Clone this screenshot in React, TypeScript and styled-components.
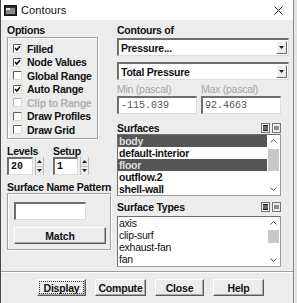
import styled, { createGlobalStyle } from 'styled-components';

const GlobalStyle = createGlobalStyle`
  html, body {
    margin: 0;
    padding: 0;
    background: #e4e4e4;
  }
  body {
    font-family: "Liberation Sans", Arial, sans-serif;
  }
`;

const Window = styled.div`
  width: 294px;
  height: 303px;
  box-sizing: border-box;
  background: #ececec;
  border-left: 1px solid #4a4a4a;
  border-right: 1px solid #8a8a8a;
  display: flex;
  flex-direction: column;
  overflow: hidden;
`;

const TitleBar = styled.div`
  height: 20px;
  background: #ffffff;
  display: flex;
  align-items: center;
  padding: 0 10px 0 3px;
  gap: 4px;
  font-size: 11px;
  color: #111;
`;

const TitleText = styled.span`
  flex: 1;
  letter-spacing: 0.1px;
`;

const Body = styled.div`
  flex: 1;
  display: flex;
  gap: 6px;
  padding: 4px 0 0 6px;
`;

const Column = styled.div<{ $width: number }>`
  width: ${(p) => p.$width}px;
  display: flex;
  flex-direction: column;
`;

const Label = styled.div<{ $muted?: boolean; $top?: number; $height?: number }>`
  height: ${(p) => p.$height ?? 13}px;
  line-height: ${(p) => p.$height ?? 13}px;
  margin-top: ${(p) => p.$top ?? 0}px;
  font-size: ${(p) => (p.$muted ? 10.5 : 10.5)}px;
  font-weight: ${(p) => (p.$muted ? 400 : 700)};
  letter-spacing: -0.25px;
  color: ${(p) => (p.$muted ? '#a4a4a4' : '#111')};
  white-space: nowrap;
`;

const GroupBox = styled.div<{ $width: number }>`
  width: ${(p) => p.$width}px;
  box-sizing: border-box;
  border: 1px solid #a0a0a0;
  box-shadow: inset 1px 1px 0 #fff, 1px 1px 0 #fff;
  display: flex;
  flex-direction: column;
`;

const OptionsBox = styled(GroupBox)`
  height: 102px;
  padding: 4px 0 0 5px;
`;

const CheckRow = styled.div<{ $disabled?: boolean }>`
  height: 13.5px;
  display: flex;
  align-items: center;
  gap: 5px;
  font-size: 10.5px;
  font-weight: 700;
  letter-spacing: -0.25px;
  color: ${(p) => (p.$disabled ? '#b0b0b0' : '#111')};
  white-space: nowrap;
`;

const Fields = styled.div`
  display: flex;
  gap: 9px;
`;

const Field = styled.div`
  display: flex;
  flex-direction: column;
`;

const SpinRow = styled.div`
  display: flex;
  gap: 2px;
`;

const TextBox = styled.div<{ $width: number; $bold?: boolean }>`
  width: ${(p) => p.$width}px;
  height: 18px;
  box-sizing: border-box;
  background: #fff;
  border-top: 2px solid #6e6e6e;
  border-left: 2px solid #6e6e6e;
  border-right: 1px solid #dcdcdc;
  border-bottom: 1px solid #dcdcdc;
  padding-left: 2px;
  font-family: "Liberation Mono", "Courier New", monospace;
  font-size: 10px;
  font-weight: ${(p) => (p.$bold ? 700 : 400)};
  line-height: 15px;
  color: ${(p) => (p.$bold ? '#111' : '#555')};
`;

const Spinner = styled.div`
  width: 9px;
  height: 18px;
  display: flex;
  flex-direction: column;
  border-left: 1px solid #bdbdbd;
  border-right: 1px solid #bdbdbd;
  box-sizing: border-box;
`;

const SpinHalf = styled.div`
  flex: 1;
  display: flex;
  align-items: center;
  justify-content: center;
  border-bottom: 1px solid #c4c4c4;
  &:last-child {
    border-bottom: none;
  }
`;

const PatternBox = styled(GroupBox)`
  padding: 8px 0 5px 6px;
  gap: 7px;
`;

const Button = styled.div<{ $width: number; $focused?: boolean }>`
  width: ${(p) => p.$width}px;
  height: 17px;
  box-sizing: border-box;
  background: #ececec;
  border-top: 1px solid #fff;
  border-left: 1px solid #fff;
  border-right: 1px solid #5a5a5a;
  border-bottom: 1px solid #5a5a5a;
  box-shadow: inset -1px -1px 0 #a8a8a8;
  display: flex;
  align-items: center;
  justify-content: center;
  font-size: 10.5px;
  font-weight: 700;
  letter-spacing: -0.2px;
  color: #111;
  outline: ${(p) => (p.$focused ? '1px dotted #333' : 'none')};
  outline-offset: -3px;
`;

const Dropdown = styled.div<{ $top: number }>`
  width: 172px;
  height: 18px;
  margin-top: ${(p) => p.$top}px;
  box-sizing: border-box;
  background: #fff;
  border-top: 2px solid #6e6e6e;
  border-left: 2px solid #6e6e6e;
  border-right: 1px solid #dcdcdc;
  border-bottom: 1px solid #dcdcdc;
  display: flex;
  align-items: center;
  padding: 0 1px 0 2px;
  font-size: 10.5px;
  font-weight: 700;
  letter-spacing: -0.25px;
  color: #111;
`;

const DropText = styled.span`
  flex: 1;
`;

const DropArrow = styled.div`
  width: 11px;
  height: 13px;
  box-sizing: border-box;
  background: #ececec;
  border-top: 1px solid #fff;
  border-left: 1px solid #fff;
  border-right: 1px solid #6a6a6a;
  border-bottom: 1px solid #6a6a6a;
  display: flex;
  align-items: center;
  justify-content: center;
`;

const RangeRow = styled.div`
  width: 164px;
  display: flex;
  gap: 4px;
  margin-top: 3px;
`;

const ListHeader = styled.div<{ $top: number }>`
  width: 164px;
  height: 13px;
  margin-top: ${(p) => p.$top}px;
  display: flex;
  align-items: center;
  gap: 2px;
`;

const HeaderLabel = styled.span`
  flex: 1;
  font-size: 10.5px;
  font-weight: 700;
  letter-spacing: -0.25px;
  color: #111;
`;

const ListBox = styled.div<{ $top: number; $height: number }>`
  width: 164px;
  height: ${(p) => p.$height}px;
  margin-top: ${(p) => p.$top}px;
  box-sizing: border-box;
  background: #fff;
  border-top: 1px solid #6e6e6e;
  border-left: 1px solid #6e6e6e;
  border-right: 1px solid #9a9a9a;
  border-bottom: 1px solid #9a9a9a;
  display: flex;
`;

const ListItems = styled.div`
  flex: 1;
  display: flex;
  flex-direction: column;
`;

const ListItem = styled.div<{ $selected?: boolean; $bold?: boolean }>`
  height: 12px;
  line-height: 12px;
  padding-left: 1px;
  font-size: 10.5px;
  font-weight: ${(p) => (p.$bold ? 700 : 400)};
  letter-spacing: -0.25px;
  background: ${(p) => (p.$selected ? '#555555' : 'transparent')};
  color: ${(p) => (p.$selected ? '#dedede' : '#111')};
  white-space: nowrap;
`;

const ScrollBar = styled.div`
  width: 13px;
  display: flex;
  flex-direction: column;
  align-items: center;
  background: #fff;
`;

const ScrollArrow = styled.div`
  height: 12px;
  display: flex;
  align-items: center;
  justify-content: center;
`;

const ScrollTrack = styled.div<{ $thumbTop: number; $thumbHeight: number }>`
  flex: 1;
  width: 11px;
  position: relative;
  &::after {
    content: '';
    position: absolute;
    left: 0;
    right: 0;
    top: ${(p) => p.$thumbTop}px;
    height: ${(p) => p.$thumbHeight}px;
    background: #c8c8c8;
  }
`;

const Separator = styled.div`
  height: 1px;
  background: #a0a0a0;
  border-bottom: 1px solid #fff;
`;

const ButtonRow = styled.div`
  height: 30px;
  display: flex;
  gap: 9px;
  padding: 6px 0 0 36px;
  box-sizing: border-box;
`;

function AppIcon() {
  return (
    <svg width="13" height="11" viewBox="0 0 13 11">
      <rect x="0.5" y="0.5" width="12" height="10" fill="#2a2a2a" stroke="#111" />
      <rect x="2" y="3" width="9" height="6" fill="#8a8a8a" />
      <rect x="2" y="3" width="4" height="2" fill="#e8e8e8" />
    </svg>
  );
}

function CloseIcon() {
  return (
    <svg width="9" height="9" viewBox="0 0 9 9">
      <path d="M0.5 0.5 L8.5 8.5 M8.5 0.5 L0.5 8.5" stroke="#222" strokeWidth="1" />
    </svg>
  );
}

function CheckBox({ checked, disabled }: { checked?: boolean; disabled?: boolean }) {
  const line = disabled ? '#b8b8b8' : '#111';
  return (
    <svg width="9" height="9" viewBox="0 0 9 9">
      <rect x="0" y="0" width="9" height="9" fill="#fff" />
      <path d="M0.5 8.5 V0.5 H8.5" stroke={disabled ? '#b8b8b8' : '#5a5a5a'} fill="none" />
      <path d="M8.5 0.5 V8.5 H0.5" stroke="#d8d8d8" fill="none" />
      {checked && (
        <path d="M2 4 L3.8 6 L7 2.2" stroke={line} strokeWidth="1.6" fill="none" />
      )}
    </svg>
  );
}

function Triangle({ up, size = 5 }: { up?: boolean; size?: number }) {
  const h = Math.ceil(size / 2);
  return (
    <svg width={size} height={h} viewBox={`0 0 ${size} ${h}`}>
      <path
        d={up ? `M0 ${h} L${size / 2} 0 L${size} ${h} Z` : `M0 0 L${size} 0 L${size / 2} ${h} Z`}
        fill="#222"
      />
    </svg>
  );
}

function Chevron({ up }: { up?: boolean }) {
  return (
    <svg width="7" height="4" viewBox="0 0 7 4">
      <path d={up ? 'M0.5 3.5 L3.5 0.5 L6.5 3.5' : 'M0.5 0.5 L3.5 3.5 L6.5 0.5'} stroke="#555" fill="none" />
    </svg>
  );
}

function ListTools() {
  return (
    <>
      <svg width="9" height="10" viewBox="0 0 9 10">
        <rect x="0.5" y="0.5" width="8" height="9" fill="#ececec" stroke="#777" />
        <rect x="2" y="2" width="5" height="6" fill="#222" />
        <path d="M2 4 H7 M2 6 H7" stroke="#aaa" />
      </svg>
      <svg width="9" height="10" viewBox="0 0 9 10">
        <rect x="0.5" y="0.5" width="8" height="9" fill="#ececec" stroke="#777" />
        <path d="M2 4 H7 M2 6 H7" stroke="#333" />
      </svg>
    </>
  );
}

function Spin() {
  return (
    <Spinner>
      <SpinHalf>
        <Triangle up />
      </SpinHalf>
      <SpinHalf>
        <Triangle />
      </SpinHalf>
    </Spinner>
  );
}

function Scroll({ thumbTop, thumbHeight }: { thumbTop: number; thumbHeight: number }) {
  return (
    <ScrollBar>
      <ScrollArrow>
        <Chevron up />
      </ScrollArrow>
      <ScrollTrack $thumbTop={thumbTop} $thumbHeight={thumbHeight} />
      <ScrollArrow>
        <Chevron />
      </ScrollArrow>
    </ScrollBar>
  );
}

const options = [
  { name: 'Filled', checked: true },
  { name: 'Node Values', checked: true },
  { name: 'Global Range' },
  { name: 'Auto Range', checked: true },
  { name: 'Clip to Range', disabled: true },
  { name: 'Draw Profiles' },
  { name: 'Draw Grid' },
];

const surfaces = [
  { name: 'body', selected: true },
  { name: 'default-interior' },
  { name: 'floor', selected: true },
  { name: 'outflow.2' },
  { name: 'shell-wall' },
];

const surfaceTypes = ['axis', 'clip-surf', 'exhaust-fan', 'fan'];

export default function App() {
  return (
    <>
      <GlobalStyle />
      <Window>
        <TitleBar>
          <AppIcon />
          <TitleText>Contours</TitleText>
          <CloseIcon />
        </TitleBar>
        <Body>
          <Column $width={104}>
            <Label>Options</Label>
            <OptionsBox $width={91}>
              {options.map((o) => (
                <CheckRow key={o.name} $disabled={o.disabled}>
                  <CheckBox checked={o.checked} disabled={o.disabled} />
                  {o.name}
                </CheckRow>
              ))}
            </OptionsBox>
            <Fields>
              <Field>
                <Label $top={6} $height={12}>Levels</Label>
                <SpinRow>
                  <TextBox $width={26} $bold>20</TextBox>
                  <Spin />
                </SpinRow>
              </Field>
              <Field>
                <Label $top={6} $height={12}>Setup</Label>
                <SpinRow>
                  <TextBox $width={25} $bold>1</TextBox>
                  <Spin />
                </SpinRow>
              </Field>
            </Fields>
            <Label $top={6} $height={12}>Surface Name Pattern</Label>
            <PatternBox $width={104}>
              <TextBox $width={72} />
              <Button $width={92}>Match</Button>
            </PatternBox>
          </Column>
          <Column $width={172}>
            <Label>Contours of</Label>
            <Dropdown $top={1}>
              <DropText>Pressure...</DropText>
              <DropArrow>
                <Triangle />
              </DropArrow>
            </Dropdown>
            <Dropdown $top={6}>
              <DropText>Total Pressure</DropText>
              <DropArrow>
                <Triangle />
              </DropArrow>
            </Dropdown>
            <RangeRow>
              <Field>
                <Label $muted $height={12}>Min (pascal)</Label>
                <TextBox $width={80} style={{ marginTop: 1 }}>-115.039</TextBox>
              </Field>
              <Field>
                <Label $muted $height={12}>Max (pascal)</Label>
                <TextBox $width={80} style={{ marginTop: 1 }}>92.4663</TextBox>
              </Field>
            </RangeRow>
            <ListHeader $top={7}>
              <HeaderLabel>Surfaces</HeaderLabel>
              <ListTools />
            </ListHeader>
            <ListBox $top={0} $height={62}>
              <ListItems>
                {surfaces.map((s) => (
                  <ListItem key={s.name} $selected={s.selected} $bold>
                    {s.name}
                  </ListItem>
                ))}
              </ListItems>
              <Scroll thumbTop={2} thumbHeight={22} />
            </ListBox>
            <ListHeader $top={4}>
              <HeaderLabel>Surface Types</HeaderLabel>
              <ListTools />
            </ListHeader>
            <ListBox $top={3} $height={51}>
              <ListItems>
                {surfaceTypes.map((s) => (
                  <ListItem key={s}>{s}</ListItem>
                ))}
              </ListItems>
              <Scroll thumbTop={1} thumbHeight={13} />
            </ListBox>
          </Column>
        </Body>
        <Separator />
        <ButtonRow>
          <Button $width={49} $focused>Display</Button>
          <Button $width={51}>Compute</Button>
          <Button $width={49}>Close</Button>
          <Button $width={51}>Help</Button>
        </ButtonRow>
      </Window>
    </>
  );
}
